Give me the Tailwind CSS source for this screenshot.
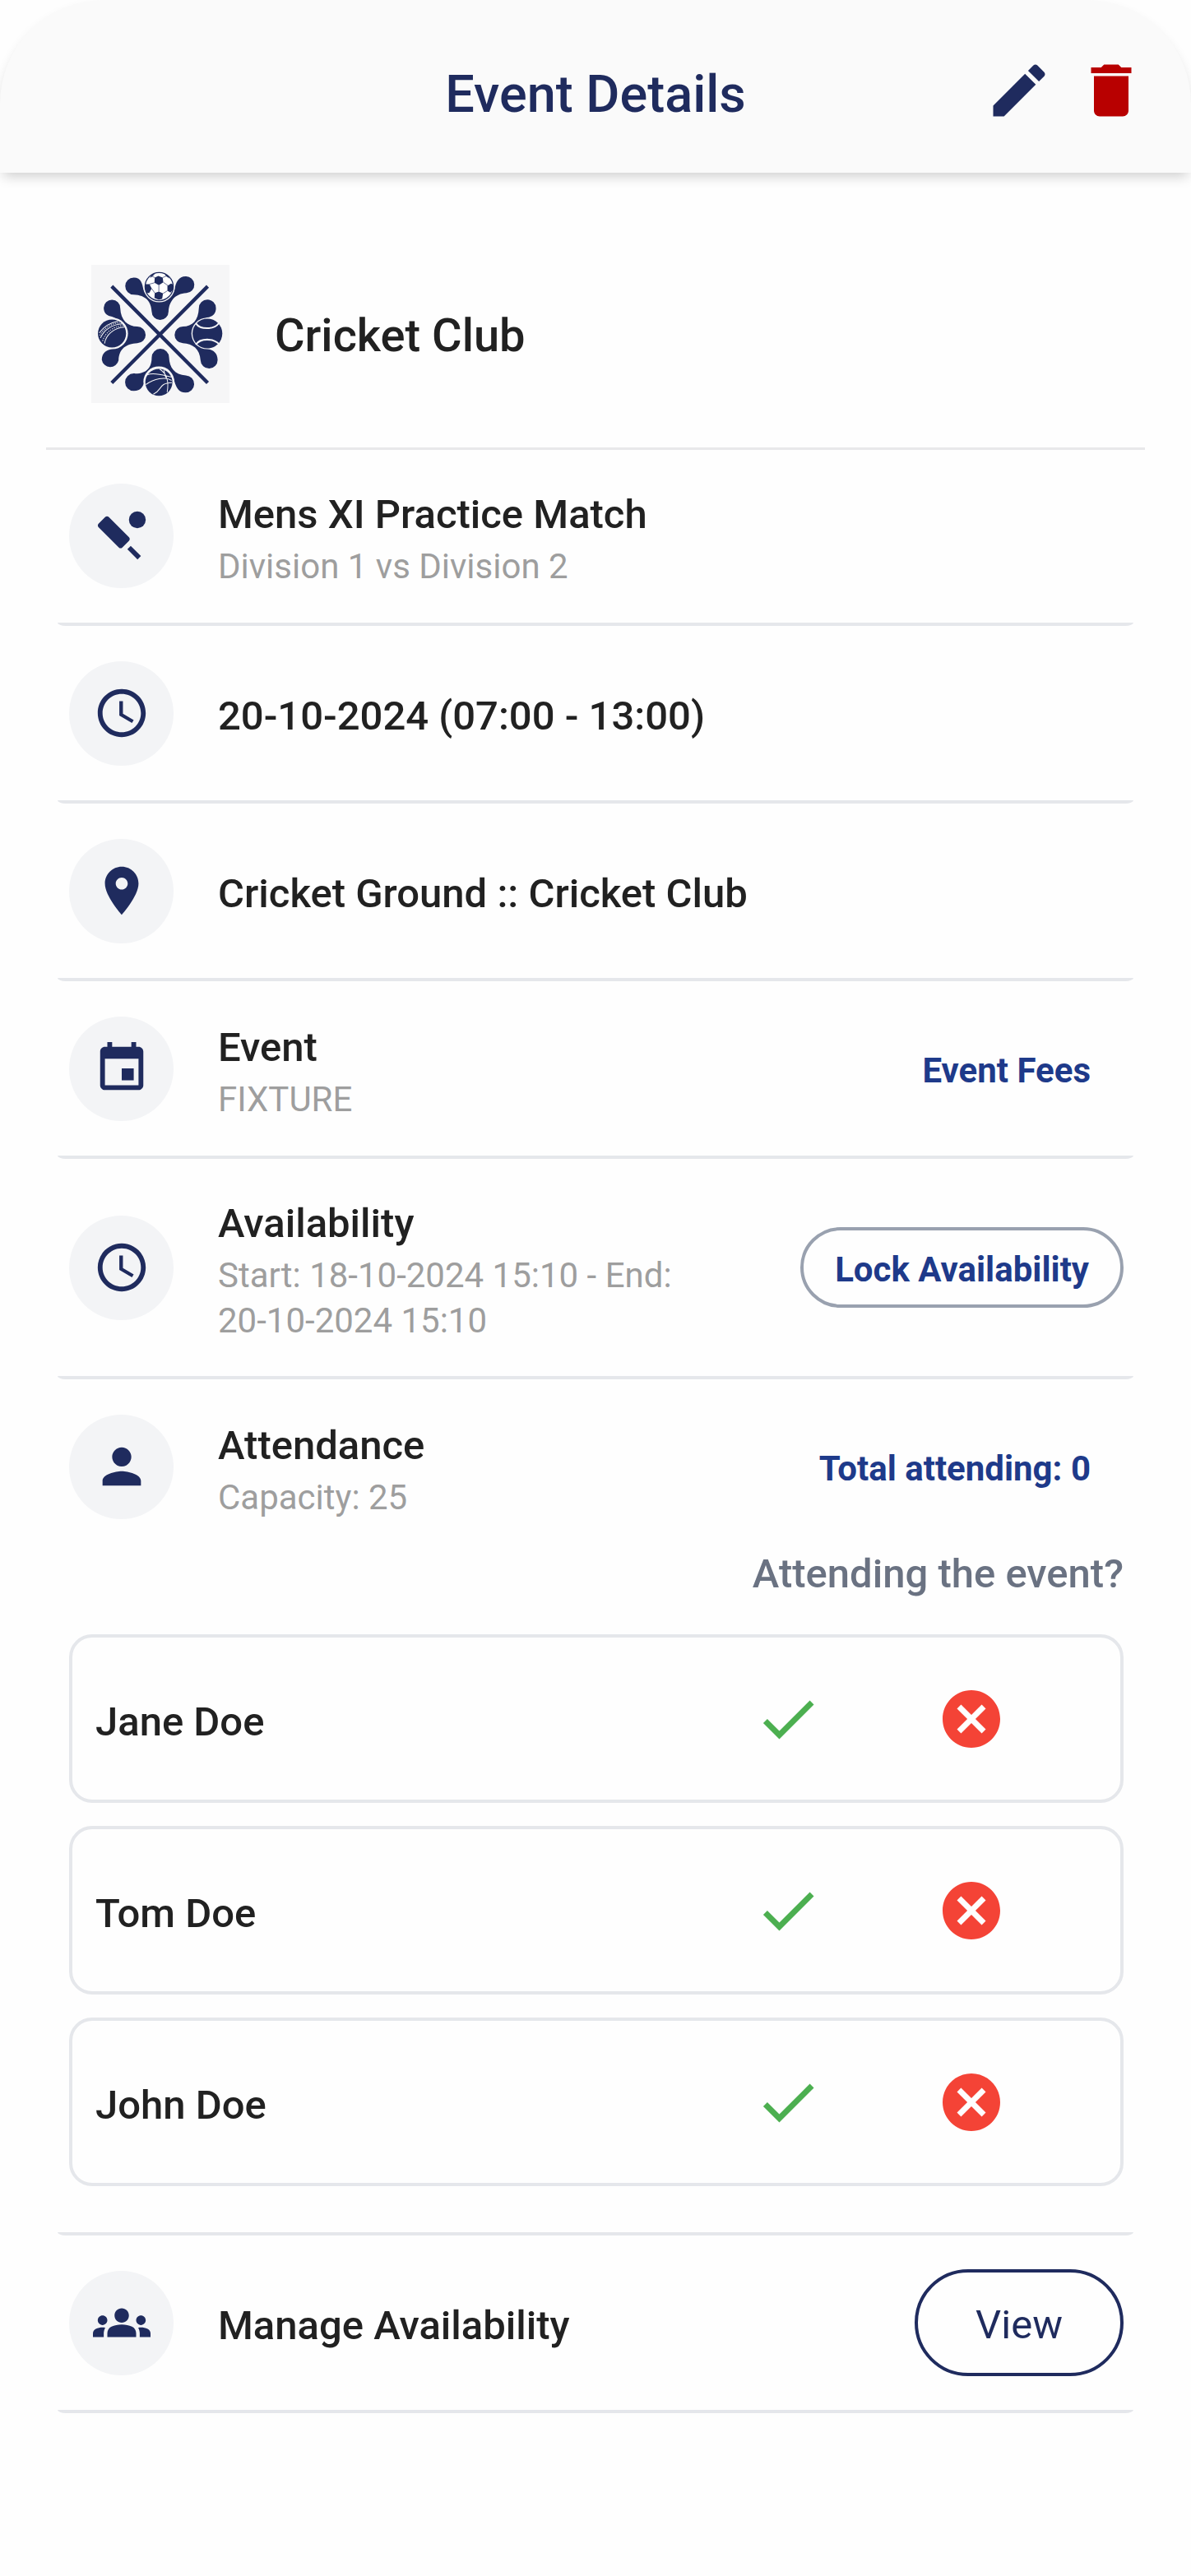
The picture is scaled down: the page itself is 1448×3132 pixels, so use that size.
<!DOCTYPE html>
<html lang="en">
<head>
<meta charset="utf-8">
<meta name="viewport" content="width=device-width, initial-scale=1">
<title>Event Details</title>
<script src="https://cdn.jsdelivr.net/npm/@tailwindcss/browser@4"></script>
</head>
<body class="min-h-screen bg-[#fefefe] font-['Roboto',sans-serif] text-[49px] leading-[70px] font-medium text-[#212121]">

<!-- Shared icon shapes -->
<svg class="hidden" aria-hidden="true">
  <symbol id="clock" viewBox="0 0 24 24"><path d="M11.99 2C6.47 2 2 6.48 2 12s4.47 10 9.99 10C17.52 22 22 17.52 22 12S17.52 2 11.99 2zM12 20c-4.42 0-8-3.58-8-8s3.58-8 8-8 8 3.58 8 8-3.58 8-8 8zm.5-13H11v6l5.25 3.15.75-1.23-4.5-2.67z"/></symbol>
  <symbol id="check" viewBox="0 0 24 24"><path d="M9 16.17L4.83 12l-1.42 1.41L9 19 21 7l-1.41-1.41z"/></symbol>
  <symbol id="cancel" viewBox="0 0 24 24"><path d="M12 2C6.47 2 2 6.47 2 12s4.47 10 10 10 10-4.47 10-10S17.53 2 12 2zm5 13.59L15.59 17 12 13.41 8.41 17 7 15.59 10.59 12 7 8.41 8.41 7 12 10.59 15.59 7 17 8.41 13.41 12 17 15.59z"/></symbol>
</svg>

<header class="relative flex h-[210px] items-center justify-end gap-7 rounded-t-[126px] bg-[#fafafa] px-[55px] pt-[10px] shadow-[0_8px_16px_-4px_rgba(0,0,0,0.2)]">
  <h1 class="absolute inset-x-0 pt-[10px] text-center text-[63px] leading-[84px] text-[#1f2b5e]">Event Details</h1>
  <button type="button" aria-label="Edit event" class="relative text-[#1f2b5e]">
    <svg class="size-[84px] fill-current" viewBox="0 0 24 24"><path d="M3 17.25V21h3.75L17.81 9.94l-3.75-3.75L3 17.25zM20.71 7.04c.39-.39.39-1.02 0-1.41l-2.34-2.34c-.39-.39-1.02-.39-1.41 0l-1.83 1.83 3.75 3.75 1.83-1.83z"/></svg>
  </button>
  <button type="button" aria-label="Delete event" class="relative text-[#b80000]">
    <svg class="size-[84px] fill-current" viewBox="0 0 24 24"><path d="M6 19c0 1.1.9 2 2 2h8c1.1 0 2-.9 2-2V7H6v12zM19 4h-3.500l-1-1h-5l-1 1H5v2h14V4z"/></svg>
  </button>
</header>

<main class="px-14 pt-14 pb-[198px]">
  <section class="flex items-center gap-[55px] border-b-3 border-[#e8e8ea] px-[55px] pt-14 pb-[54px]">
    <svg class="size-[168px] shrink-0 bg-[#f6f6f7]" viewBox="33 36 501 501" role="img" aria-label="Club logo">
      <g fill="#1f2b5e">
        <path d="M187 82C214 82 218 105 222 125C226 165 332 165 335 125C339 100 350 78 375 78A30 30 0 0 1 378 138C335 140 315 170 313 205A30 30 0 0 1 252 205C250 170 232 146 187 144A31 31 0 0 1 187 82Z"/>
        <path d="M187 493C214 493 220 476 226 460C232 415 328 415 335 460C341 480 350 499 374 499A31 31 0 0 0 376 437C335 434 316 408 315 372A31 31 0 0 0 252 372C252 408 234 432 187 430A31 31 0 0 0 187 493Z"/>
        <path d="M78 192A30 30 0 0 1 138 193C140 238 165 258 200 260A29 29 0 0 1 200 320C160 322 133 340 132 382A31 31 0 0 1 71 380C72 352 90 345 110 340C160 330 160 240 108 224C92 222 78 212 78 192Z"/>
        <path d="M485 193A31 31 0 0 0 423 193C421 238 400 258 365 260A30 30 0 0 0 365 320C400 322 427 340 429 382A31 31 0 0 0 491 380C490 352 472 345 453 340C403 330 403 240 453 227C472 224 485 213 485 193Z"/>
      </g>
      <path d="M107 114L455 464M455 114L107 464" fill="none" stroke="#1f2b5e" stroke-width="13"/>
      <g fill="#f6f6f7"><circle cx="279" cy="115" r="57"/><circle cx="109" cy="285" r="57"/><circle cx="453" cy="285" r="57"/><circle cx="278" cy="460" r="56"/></g>
      <!-- Football -->
      <circle cx="279" cy="115" r="51" fill="#fff" stroke="#1f2b5e" stroke-width="4"/>
      <path fill="#1f2b5e" d="M263 82L276 76L292 82L294 99L278 110L262 101ZM230 106L244 106L252 122L243 138L234 138L228 120ZM309 112L322 104L331 108L329 126L320 137L309 130ZM263 138L278 133L293 140L290 159L278 163L262 156ZM250 73L264 67L258 75L246 84ZM298 67L312 76L317 86L304 77Z"/>
      <path d="M262 101L244 106M294 99L312 112M252 122L263 138M309 130L293 140M263 82L250 76M292 82L306 76M278 110L278 133" fill="none" stroke="#1f2b5e" stroke-width="2"/>
      <!-- Cricket ball -->
      <circle cx="108" cy="285" r="51" fill="#1f2b5e"/>
      <g fill="none" stroke="#f6f6f7" stroke-width="3"><path d="M62 283C76 262 98 246 130 240"/><path d="M66 301C80 272 108 253 145 250"/><path d="M81 321C86 289 116 264 153 262"/><path stroke-dasharray="4 4" d="M64 292C78 267 102 250 137 245"/><path stroke-dasharray="4 4" d="M74 312C84 281 110 260 149 256"/></g>
      <!-- Tennis ball -->
      <circle cx="454" cy="285" r="54" fill="#1f2b5e"/>
      <path d="M412 248C428 272 478 272 496 247M412 325C428 301 478 301 497 325" fill="none" stroke="#f6f6f7" stroke-width="6"/>
      <!-- Basketball -->
      <circle cx="278" cy="462" r="49" fill="#1f2b5e"/>
      <path d="M236 435C260 424 300 438 325 443M231 470C260 450 300 440 324 455M281 414C307 430 315 460 308 498M258 505C292 490 275 465 325 463M296 418L303 446" fill="none" stroke="#f6f6f7" stroke-width="3"/>
    </svg>
    <h2 class="pt-1 text-[56px]">Cricket Club</h2>
  </section>

  <div class="-mt-[2px] px-[14px]">
    <section class="flex min-h-[212px] items-center gap-[54px] py-[42px] pr-3 pl-[14px]">
      <span class="grid size-[127px] shrink-0 place-items-center rounded-full bg-gray-100 text-[#1f2b5e]">
        <svg class="size-[70px] fill-current" viewBox="0 0 24 24"><path d="M15.05 12.81L6.56 4.32c-.39-.39-1.02-.39-1.41 0L2.32 7.150c-.39.39-.39 1.02 0 1.41l8.490 8.490c.39.39 1.02.39 1.41 0l2.83-2.83c.39-.39.39-1.02 0-1.41z"/><rect x="16.17" y="16.17" width="2" height="6" transform="rotate(-45 17.17 19.17)"/><circle cx="18.5" cy="5.5" r="3.5"/></svg>
      </span>
      <div class="mt-0.5 -mb-0.5 flex-1">
        <h3>Mens XI Practice Match</h3>
        <p class="text-[42px] leading-[55px] font-normal text-[#9e9e9e]">Division 1 vs Division 2</p>
      </div>
    </section>
    <hr class="h-1 rounded-b-[10px_4px] border-0 bg-gray-200">

    <section class="flex min-h-[212px] items-center gap-[54px] py-[42px] pr-3 pl-[14px]">
      <span class="grid size-[127px] shrink-0 place-items-center rounded-full bg-gray-100 text-[#1f2b5e]">
        <svg class="size-[70px] fill-current"><use href="#clock"/></svg>
      </span>
      <h3 class="mt-1 -mb-1 flex-1">20-10-2024 (07:00 - 13:00)</h3>
    </section>
    <hr class="h-1 rounded-b-[10px_4px] border-0 bg-gray-200">

    <section class="flex min-h-[212px] items-center gap-[54px] py-[42px] pr-3 pl-[14px]">
      <span class="grid size-[127px] shrink-0 place-items-center rounded-full bg-gray-100 text-[#1f2b5e]">
        <svg class="size-[70px] fill-current" viewBox="0 0 24 24"><path d="M12 2C8.130 2 5 5.130 5 9c0 5.250 7 13 7 13s7-7.750 7-13c0-3.870-3.130-7-7-7zm0 9.500c-1.380 0-2.500-1.120-2.500-2.500s1.120-2.500 2.500-2.500 2.500 1.120 2.500 2.500-1.120 2.500-2.500 2.500z"/></svg>
      </span>
      <h3 class="mt-1 -mb-1 flex-1">Cricket Ground :: Cricket Club</h3>
    </section>
    <hr class="h-1 rounded-b-[10px_4px] border-0 bg-gray-200">

    <section class="flex min-h-[212px] items-center gap-[54px] py-[42px] pr-3 pl-[14px]">
      <span class="grid size-[127px] shrink-0 place-items-center rounded-full bg-gray-100 text-[#1f2b5e]">
        <svg class="size-[70px] fill-current" viewBox="0 0 24 24"><path d="M17 12h-5v5h5v-5zM16 1v2H8V1H6v2H5c-1.110 0-1.990.9-1.990 2L3 19c0 1.100.89 2 2 2h14c1.100 0 2-.9 2-2V5c0-1.100-.9-2-2-2h-1V1h-2zm3 18H5V8h14v11z"/></svg>
      </span>
      <div class="mt-0.5 -mb-0.5 flex-1">
        <h3>Event</h3>
        <p class="text-[42px] leading-[55px] font-normal text-[#9e9e9e]">FIXTURE</p>
      </div>
      <button type="button" class="px-10 pt-[6px] text-[42px] leading-[56px] font-bold text-[#1e3a8a]">Event Fees</button>
    </section>
    <hr class="h-1 rounded-b-[10px_4px] border-0 bg-gray-200">

    <section class="flex min-h-[212px] items-center gap-[54px] py-[42px] pr-3 pl-[14px]">
      <span class="grid size-[127px] shrink-0 place-items-center rounded-full bg-gray-100 text-[#1f2b5e]">
        <svg class="size-[70px] fill-current"><use href="#clock"/></svg>
      </span>
      <div class="mt-0.5 -mb-0.5 flex-1">
        <h3>Availability</h3>
        <p class="text-[42px] leading-[55px] font-normal text-[#9e9e9e]">Start: <time class="whitespace-nowrap">18-10-2024 15:10</time> - End: <time class="whitespace-nowrap">20-10-2024 15:10</time></p>
      </div>
      <button type="button" class="rounded-full border-4 border-gray-400 px-[38px] pt-5 pb-[14px] text-[42px] leading-[56px] font-bold text-[#1e3a8a]">Lock Availability</button>
    </section>
    <hr class="h-1 rounded-b-[10px_4px] border-0 bg-gray-200">

    <section class="pt-[42px] pr-3 pb-14 pl-[14px]">
      <div class="flex min-h-32 items-center gap-[54px]">
        <span class="grid size-[127px] shrink-0 place-items-center rounded-full bg-gray-100 text-[#1f2b5e]">
          <svg class="size-[70px] fill-current" viewBox="0 0 24 24"><path d="M12 12c2.210 0 4-1.790 4-4s-1.790-4-4-4-4 1.790-4 4 1.790 4 4 4zm0 2c-2.670 0-8 1.340-8 4v2h16v-2c0-2.660-5.330-4-8-4z"/></svg>
        </span>
        <div class="mt-0.5 -mb-0.5 flex-1">
          <h3>Attendance</h3>
          <p class="text-[42px] leading-[55px] font-normal text-[#9e9e9e]">Capacity: 25</p>
        </div>
        <p class="px-10 pt-[6px] text-[42px] leading-[56px] font-bold text-[#1e3a8a]">Total attending: 0</p>
      </div>
      <p class="mt-8 text-right text-gray-500">Attending the event?</p>
      <ul class="mt-[38px] flex flex-col gap-7">
        <li class="flex h-[205px] items-center rounded-[28px] border-4 border-gray-200 pr-[70px] pl-7">
          <span class="flex-1 pt-2">Jane Doe</span>
          <button type="button" aria-label="Jane Doe is attending" class="grid w-[223px] place-items-center text-[#4caf50]"><svg class="size-[84px] fill-current"><use href="#check"/></svg></button>
          <button type="button" aria-label="Jane Doe is not attending" class="grid w-[223px] place-items-center text-[#f44336]"><svg class="size-[84px] fill-current"><use href="#cancel"/></svg></button>
        </li>
        <li class="flex h-[205px] items-center rounded-[28px] border-4 border-gray-200 pr-[70px] pl-7">
          <span class="flex-1 pt-2">Tom Doe</span>
          <button type="button" aria-label="Tom Doe is attending" class="grid w-[223px] place-items-center text-[#4caf50]"><svg class="size-[84px] fill-current"><use href="#check"/></svg></button>
          <button type="button" aria-label="Tom Doe is not attending" class="grid w-[223px] place-items-center text-[#f44336]"><svg class="size-[84px] fill-current"><use href="#cancel"/></svg></button>
        </li>
        <li class="flex h-[205px] items-center rounded-[28px] border-4 border-gray-200 pr-[70px] pl-7">
          <span class="flex-1 pt-2">John Doe</span>
          <button type="button" aria-label="John Doe is attending" class="grid w-[223px] place-items-center text-[#4caf50]"><svg class="size-[84px] fill-current"><use href="#check"/></svg></button>
          <button type="button" aria-label="John Doe is not attending" class="grid w-[223px] place-items-center text-[#f44336]"><svg class="size-[84px] fill-current"><use href="#cancel"/></svg></button>
        </li>
      </ul>
    </section>
    <hr class="h-1 rounded-b-[10px_4px] border-0 bg-gray-200">

    <section class="flex min-h-[212px] items-center gap-[54px] py-10 pr-3 pl-[14px]">
      <span class="grid size-[127px] shrink-0 place-items-center rounded-full bg-gray-100 text-[#1f2b5e]">
        <svg class="size-[70px] fill-current" viewBox="0 0 24 24"><path d="M12 12.750c1.630 0 3.070.39 4.240.9 1.080.48 1.760 1.560 1.760 2.730V18H6v-1.610c0-1.180.68-2.260 1.760-2.730 1.170-.52 2.610-.91 4.240-.91zM4 13c1.100 0 2-.9 2-2s-.9-2-2-2-2 .9-2 2 .9 2 2 2zm1.130 1.100c-.37-.06-.74-.1-1.130-.1-.99 0-1.930.21-2.780.58C.48 14.900 0 15.620 0 16.430V18h4.500v-1.610c0-.83.23-1.610.63-2.290zM20 13c1.100 0 2-.9 2-2s-.9-2-2-2-2 .9-2 2 .9 2 2 2zm4 3.430c0-.81-.48-1.530-1.220-1.850-.85-.37-1.790-.58-2.780-.58-.39 0-.76.04-1.130.1.4.68.63 1.460.63 2.290V18H24v-1.570zM12 6c1.660 0 3 1.340 3 3s-1.340 3-3 3-3-1.340-3-3 1.340-3 3-3z"/></svg>
      </span>
      <h3 class="mt-1 -mb-1 flex-1">Manage Availability</h3>
      <button type="button" class="rounded-full border-4 border-[#1f2b5e] px-[70px] pt-[29px] pb-[23px] font-normal text-[#1f2b5e]">View</button>
    </section>
    <hr class="h-1 rounded-b-[10px_4px] border-0 bg-gray-200">
  </div>
</main>
</body>
</html>
